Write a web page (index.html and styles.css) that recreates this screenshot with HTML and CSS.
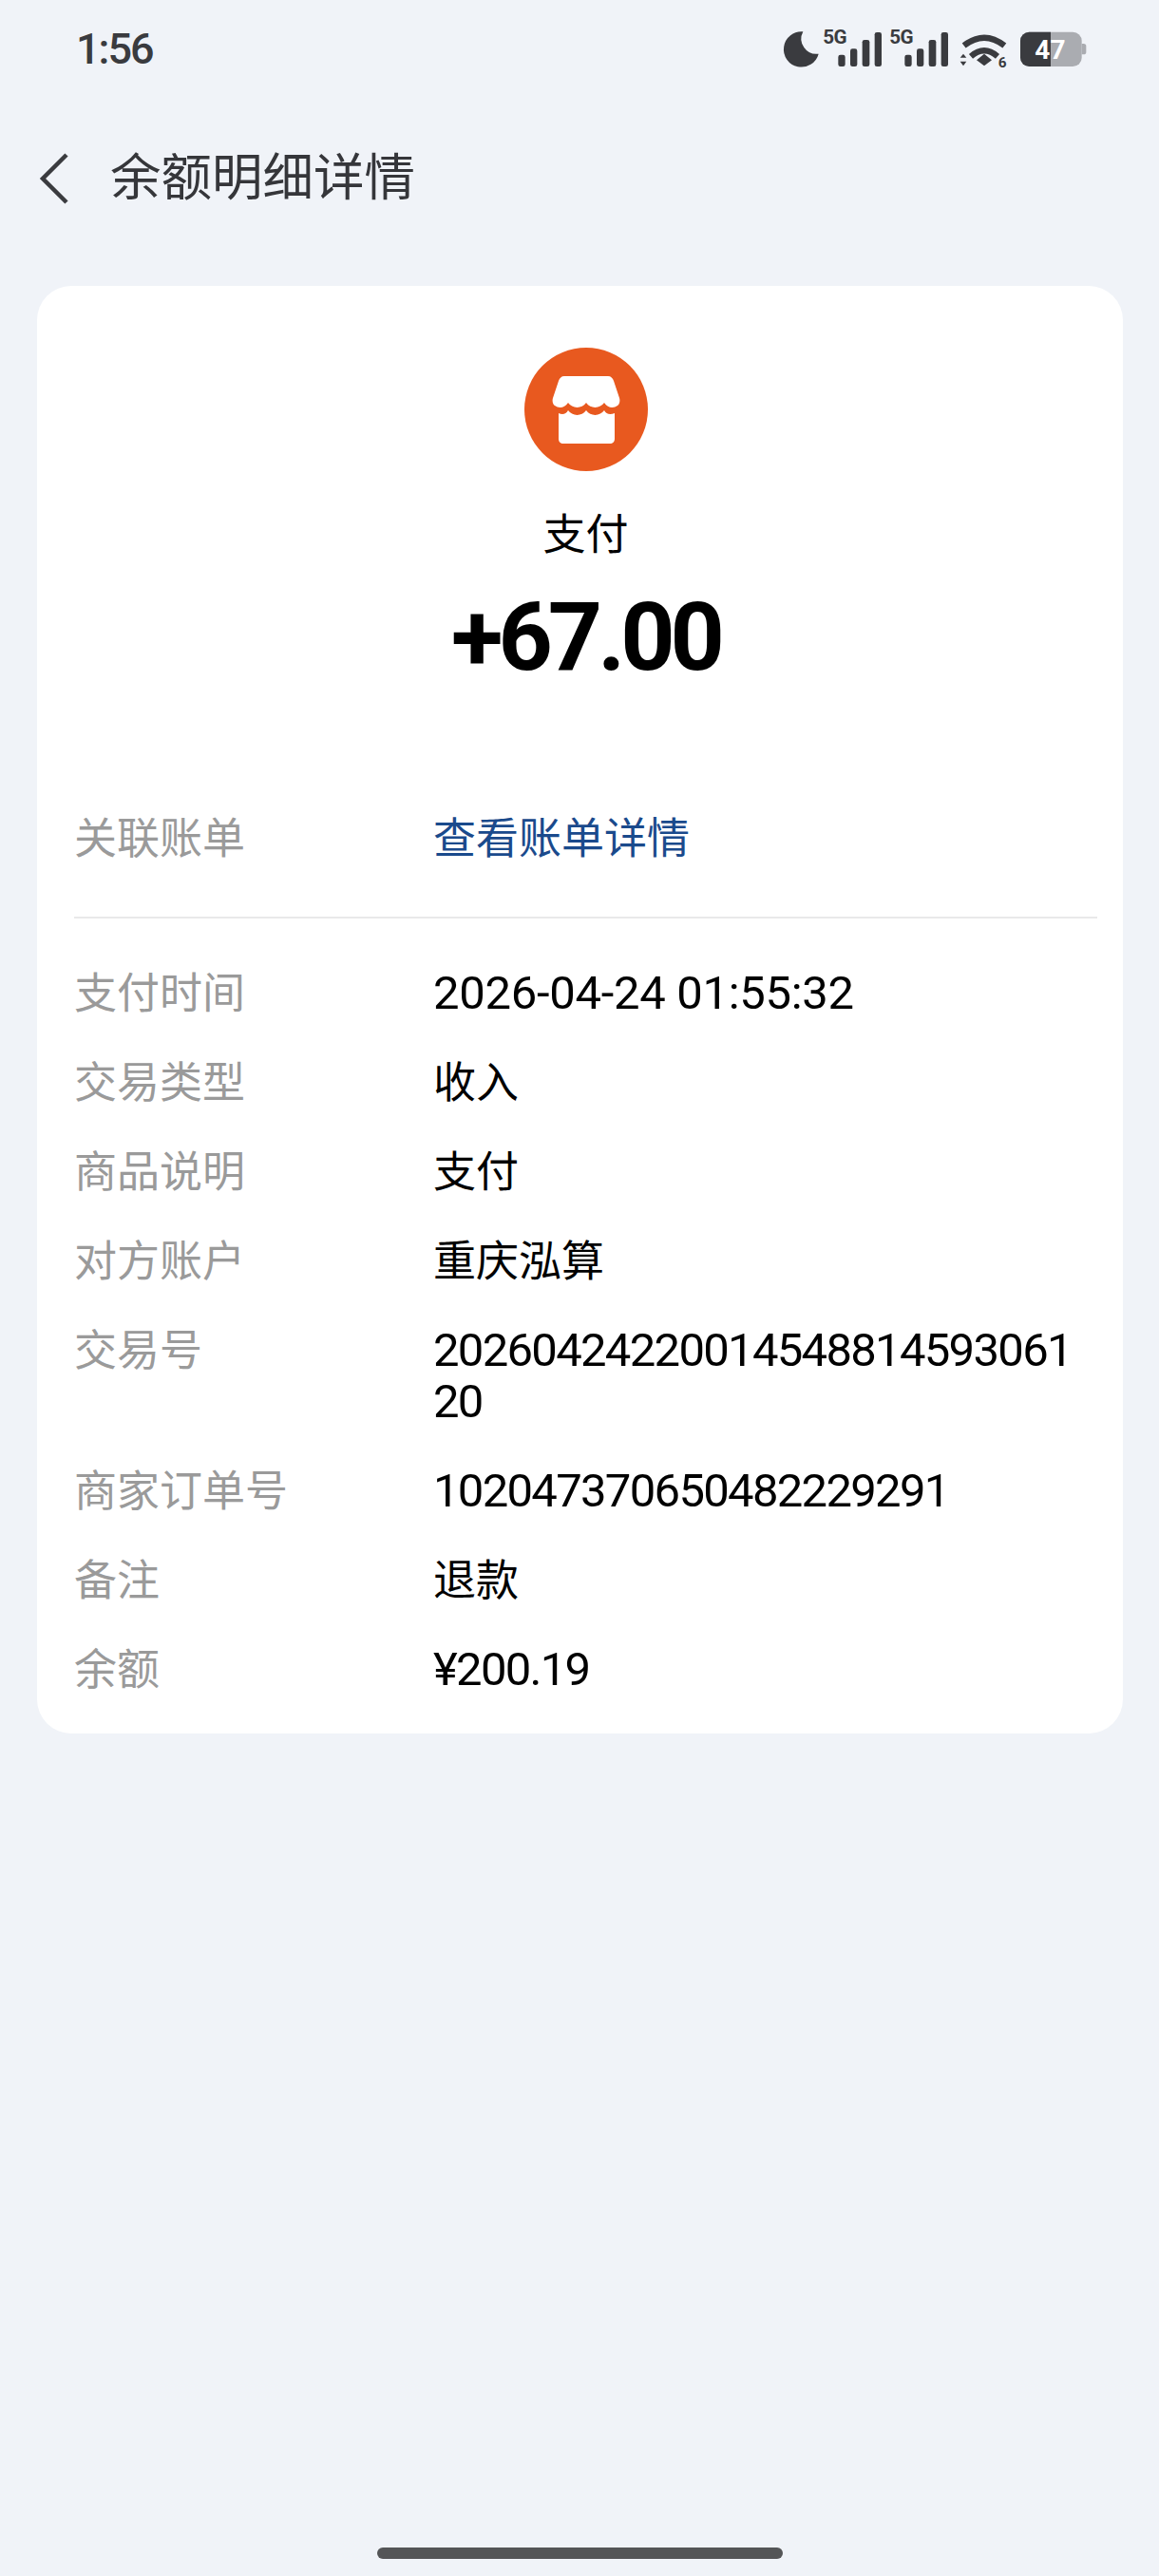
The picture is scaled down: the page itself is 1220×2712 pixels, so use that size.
FILE: index.html
```html
<!DOCTYPE html>
<html lang="zh-CN">
<head>
<meta charset="utf-8">
<title>余额明细详情</title>
<link rel="stylesheet" href="styles.css">
</head>
<body>
<div class="page">
  <div class="status">
    <span class="time">1:56</span>
    <svg class="status-icons" viewBox="0 0 1080 240" aria-hidden="true">
      <path class="ink" d="M136 70A56 56 0 1 0 185 140A48 48 0 0 1 136 70Z"/>
      <text class="s5g" x="199" y="108">5G</text>
      <rect class="ink" x="247" y="143" width="22" height="37" rx="7"/>
      <rect class="ink" x="285" y="124" width="22" height="56" rx="7"/>
      <rect class="ink" x="323" y="96" width="23" height="84" rx="7"/>
      <rect class="ink" x="362" y="72" width="22" height="108" rx="7"/>
      <text class="s5g" x="409" y="108">5G</text>
      <rect class="ink" x="457" y="143" width="22" height="37" rx="7"/>
      <rect class="ink" x="495" y="124" width="22" height="56" rx="7"/>
      <rect class="ink" x="533" y="96" width="23" height="84" rx="7"/>
      <rect class="ink" x="572" y="72" width="22" height="108" rx="7"/>
      <path class="wifi" d="M644 114Q708 64 772 114"/>
      <path class="wifi" d="M666 148Q708 112 750 148"/>
      <path class="ink" d="M684 160L708 140L732 160L708 178Z"/>
      <path class="ink" d="M632 152L642 140L652 152Z"/>
      <path class="ink" d="M632 164L652 164L642 178Z"/>
      <text class="s6" x="752" y="183">6</text>
      <rect class="batt-rest" x="822" y="71" width="194" height="109" rx="28"/>
      <path class="ink" d="M918 71H850A28 28 0 0 0 822 99V152A28 28 0 0 0 850 180H918Z"/>
      <path class="batt-rest" d="M1016 108H1022A8 8 0 0 1 1030 116V134A8 8 0 0 1 1022 142H1016Z"/>
      <text class="s47" x="868" y="155">47</text>
    </svg>
  </div>

  <header class="topbar">
    <svg class="back" viewBox="0 0 32 54" aria-hidden="true"><path d="M29 2L4 27L29 52"/></svg>
    <h1 class="title">余额明细详情</h1>
  </header>

  <main class="card">
    <div class="summary">
      <svg class="merchant" viewBox="0 0 130 130" aria-hidden="true">
        <circle class="merchant-bg" cx="65" cy="65" r="65"/>
        <path class="merchant-fg" d="M42 30H88C91 30 93 32 94 35L100 53C101 56 100 60 98 61C94 64 88 64 84 58C80 64 70 65 65 58C60 65 50 64 46 58C42 64 36 64 32 61C30 60 29 56 30 53L36 35C37 32 39 30 42 30Z"/>
        <path class="merchant-fg" d="M36 69C40 71 44 70 46 66C50 72 60 73 65 66C70 73 80 72 84 66C86 70 90 71 95 69V96C95 99 93 101 90 101H41C38 101 36 99 36 96Z"/>
      </svg>
      <div class="kind">支付</div>
      <div class="amount">+67.00</div>
    </div>

    <div class="row row-link">
      <div class="label">关联账单</div>
      <div class="value link">查看账单详情</div>
    </div>

    <hr class="divider">

    <div class="rows">
      <div class="row"><div class="label">支付时间</div><div class="value num date">2026-04-24 01:55:32</div></div>
      <div class="row"><div class="label">交易类型</div><div class="value">收入</div></div>
      <div class="row"><div class="label">商品说明</div><div class="value">支付</div></div>
      <div class="row"><div class="label">对方账户</div><div class="value">重庆泓算</div></div>
      <div class="row"><div class="label">交易号</div><div class="value num">2026042422001454881459306120</div></div>
      <div class="row"><div class="label">商家订单号</div><div class="value num">102047370650482229291</div></div>
      <div class="row"><div class="label">备注</div><div class="value">退款</div></div>
      <div class="row"><div class="label">余额</div><div class="value num">¥200.19</div></div>
    </div>
  </main>

  <div class="home"><span class="home-bar"></span></div>
</div>
</body>
</html>
```

FILE: styles.css
```css
* { box-sizing: border-box; }
html, body { margin: 0; padding: 0; background: #f0f3f8; }
body { font-family: Roboto, "Noto Sans CJK SC", "Liberation Sans", sans-serif; }

.page {
  height: 2712px;
  display: flex;
  flex-direction: column;
  overflow: hidden;
}

.status {
  height: 100px;
  padding: 0 60px 0 80px;
  display: flex;
  align-items: center;
  justify-content: space-between;
}
.time {
  font-size: 45px;
  line-height: 54px;
  font-weight: 500;
  letter-spacing: -2px;
  color: #3a3b3f;
  padding-top: 4px;
}
.status-icons { width: 360px; height: 80px; }
.ink { fill: #3a3b3f; }
.batt-rest { fill: #aaacb1; }
.wifi { fill: none; stroke: #3a3b3f; stroke-width: 19; }
.s5g { font-size: 62px; font-weight: 700; fill: #3a3b3f; letter-spacing: -2px; }
.s6 { font-size: 46px; font-weight: 700; fill: #3a3b3f; }
.s47 { font-size: 84px; font-weight: 700; fill: #fff; }

.topbar {
  height: 170px;
  padding: 6px 0 0 41px;
  display: flex;
  align-items: center;
  gap: 43px;
}
.back { width: 32px; height: 54px; }
.back path { fill: none; stroke: #3a3b3f; stroke-width: 4.5; }
.title {
  margin: 0;
  font-size: 53.5px;
  line-height: 64px;
  font-weight: 400;
  color: #35363a;
}

.card {
  margin: 31px 38px 0 39px;
  padding: 65px 27px 40px 39px;
  background: #fff;
  border-radius: 36px;
}
.summary {
  display: flex;
  flex-direction: column;
  align-items: center;
}
.merchant { width: 130px; height: 130px; display: block; }
.merchant-bg { fill: #e8591f; }
.merchant-fg { fill: #fff; }
.kind {
  margin-top: 41px;
  font-size: 45px;
  line-height: 54px;
  color: #000;
}
.amount {
  margin-top: 25px;
  font-size: 100px;
  line-height: 110px;
  font-weight: 700;
  letter-spacing: -5px;
  color: #000;
}

.row {
  display: grid;
  grid-template-columns: 378px 680px;
  font-size: 45px;
  line-height: 54px;
}
.row-link { margin-top: 130px; }
.label { color: #9a9a9a; padding-top: 1px; margin-bottom: -1px; }
.value { color: #000; word-break: break-all; padding-top: 1px; margin-bottom: -1px; }
.link { color: #1a4a8c; }
.num { font-size: 49px; letter-spacing: -1.7px; padding-top: 0; margin-bottom: 0; }
.date { letter-spacing: -0.3px; }

.divider {
  margin: 55px 0 52px;
  border: 0;
  height: 2px;
  background: #e9e9ea;
}
.rows { display: flex; flex-direction: column; gap: 40px; }

.home {
  margin-top: auto;
  padding-bottom: 18px;
  display: flex;
  justify-content: center;
}
.home-bar {
  width: 427px;
  height: 12px;
  border-radius: 6px;
  background: #545557;
}
```
